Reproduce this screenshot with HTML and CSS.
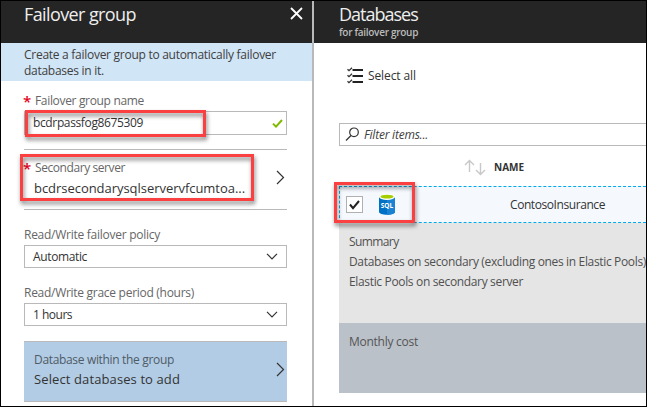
FILE: index.html
```html
<!DOCTYPE html>
<html lang="en">
<head>
<meta charset="utf-8">
<title>Failover group</title>
<link rel="stylesheet" href="styles.css">
</head>
<body>
<div class="frame">
  <section class="blade blade-group">
    <header class="blade-head">
      <h1 class="title title-group">Failover group</h1>
      <svg class="close" width="13" height="13" viewBox="0 0 13 13"><path d="M1 1l11 11M12 1L1 12"/></svg>
    </header>
    <p class="info">Create a failover group to automatically failover<br>databases in it.</p>
    <div class="form">
      <label class="label required"><span class="star">*</span>Failover group name</label>
      <div class="field field-name">
        <span class="value value-name">bcdrpassfog8675309</span>
        <svg width="11" height="9" viewBox="0 0 11 9"><path class="valid" d="M1 4.6l3 3L10 1"/></svg>
        <i class="mark mark-name"></i>
      </div>
      <div class="picker picker-server">
        <div class="picker-text">
          <div class="label required server-label"><span class="star">*</span>Secondary server</div>
          <div class="picked picked-server">bcdrsecondarysqlservervfcumtoa...</div>
        </div>
        <svg class="chevron" width="9" height="15" viewBox="0 0 9 15"><path d="M1 1l6.5 6.5L1 14"/></svg>
        <i class="mark mark-server"></i>
      </div>
      <label class="label label-policy">Read/Write failover policy</label>
      <div class="field">
        <span class="value">Automatic</span>
        <svg width="12" height="7" viewBox="0 0 12 7"><path d="M1 .8l5 5 5-5"/></svg>
      </div>
      <label class="label label-grace">Read/Write grace period (hours)</label>
      <div class="field">
        <span class="value value-hours">1 hours</span>
        <svg width="12" height="7" viewBox="0 0 12 7"><path d="M1 .8l5 5 5-5"/></svg>
      </div>
      <div class="picker picker-db">
        <div class="picker-text">
          <div class="label">Database within the group</div>
          <div class="picked">Select databases to add</div>
        </div>
        <svg class="chevron" width="9" height="15" viewBox="0 0 9 15"><path d="M1 1l6.5 6.5L1 14"/></svg>
      </div>
    </div>
  </section>
  <section class="blade blade-databases">
    <header class="blade-head head-databases">
      <h1 class="title title-databases">Databases</h1>
      <div class="subtitle">for failover group</div>
    </header>
    <div class="toolbar">
      <svg width="16" height="17" viewBox="0 0 16 17"><path class="bars" d="M5.5 3H16M5.5 9H16M5.5 15H16"/><path class="ticks" d="M.5 2.2L2 3.7 5 .7M.5 8.2L2 9.7l3-3M.5 14.2L2 15.7l3-3"/></svg>
      <span>Select all</span>
    </div>
    <div class="filter">
      <svg width="15" height="15" viewBox="0 0 15 15"><circle cx="9" cy="5.3" r="4.3"/><path d="M6 8.5L1 13.5"/></svg>
      <span>Filter items...</span>
    </div>
    <div class="columns">
      <svg width="22" height="17" viewBox="0 0 22 17"><path d="M5.500 13V1.500M1 6l4.500-4.500L10 6M16.500 4v11.500M12 11l4.500 4.500L21 11"/></svg>
      <span>NAME</span>
    </div>
    <div class="row">
      <span class="check"><svg width="11" height="10" viewBox="0 0 11 10"><path d="M1 4.500l3 3.700L10 1"/></svg></span>
      <svg class="sql" width="16" height="21" viewBox="0 0 16 21">
        <path class="sql-body" d="M0 3v15c0 1.500 3.500 2.700 8 2.700s8-1.200 8-2.700V3z"/>
        <path class="sql-shade" d="M8 3h8v15c0 1.500-3.500 2.700-8 2.700z"/>
        <ellipse class="sql-rim" cx="8" cy="3" rx="8" ry="2.900"/>
        <ellipse class="sql-top" cx="8" cy="2.700" rx="6.500" ry="1.900"/>
        <text x="8" y="14.300">SQL</text>
      </svg>
      <span class="row-name">ContosoInsurance</span>
      <i class="mark mark-row"></i>
    </div>
    <div class="summary">
      <div class="sum-title">Summary</div>
      <div>Databases on secondary (excluding ones in Elastic Pools)</div>
      <div>Elastic Pools on secondary server</div>
    </div>
    <div class="cost">Monthly cost</div>
  </section>
</div>
</body>
</html>
```
FILE: styles.css
```css
* { box-sizing: border-box; }
body { margin: 0; font: 12px/20px "Open Sans", "Noto Sans", sans-serif; letter-spacing: -.34px; color: #404040; }
svg { display: block; flex: none; fill: none; stroke: #333; stroke-width: 1.2; }
.frame { display: flex; width: 647px; height: 407px; border: 1px solid #000; background: #fff; overflow: hidden; }
.blade { overflow: hidden; height: 405px; }
.blade-group { width: 313px; border-right: 2px solid #b9b9b9; flex: none; }
.blade-databases { flex: 1; min-width: 0; }
.blade-head { height: 42px; background: #252525; color: #fff; display: flex; justify-content: space-between; padding: 0 9px 0 23px; }
.blade-group .blade-head { width: 313px; border-right: 2px solid #444; }
.blade-group .close { margin-top: 6px; stroke: #fff; stroke-width: 1.8; }
.title { margin: 0; font-size: 18px; line-height: 26px; font-weight: 400; color: #eee; white-space: nowrap; }
.title-group { letter-spacing: -.6px; }
.head-databases { display: block; padding-left: 25px; }
.title-databases { letter-spacing: -1px; }
.subtitle { font-size: 10px; line-height: 12px; font-weight: 600; letter-spacing: -.29px; color: #bbb; margin-top: -1px; }
.info { margin: 0; height: 38px; padding: 4px 0 0 23px; background: #d0e5f6; line-height: 16px; letter-spacing: -.275px; white-space: nowrap; }
.form { width: 263px; margin-left: 23px; padding-top: 10px; }
.label { display: block; color: #666; letter-spacing: -.33px; }
.required { display: flex; }
.star { width: 11px; color: #e3001b; font-size: 15px; font-weight: 600; letter-spacing: 0; margin-left: -1px; margin-right: 1px; }
.field { position: relative; height: 23px; border: 1px solid #b9b9b9; padding: 0 8px; display: flex; align-items: center; justify-content: space-between; }
.field-name { height: 24px; padding: 0 3px 0 8px; }
.value { letter-spacing: -.365px; color: #333; }
.value-hours { letter-spacing: -.5px; }
.field .valid { stroke: #7fba00; stroke-width: 2; }
.picker { position: relative; height: 61px; border: solid #b9b9b9; border-width: 1px 0; display: flex; justify-content: space-between; padding-right: 2px; }
.picker-server { margin-top: 14px; }
.server-label { letter-spacing: -.42px; padding-top: 8px; }
.picked { font-size: 13px; letter-spacing: .109px; color: #333; }
.picked-server { padding-left: 10px; letter-spacing: -.04px; }
.chevron { margin-top: 20px; }
.label-policy { margin-top: 15px; letter-spacing: -.262px; }
.label-grace { margin-top: 15px; letter-spacing: -.281px; }
.picker-db { margin-top: 15px; background: #b2cce5; padding-left: 10px; padding-top: 8px; }
.picker-db .label { color: #4f5b66; }
.picker-db .picked { margin-top: -1px; }
.picker-db .chevron { margin-top: 12px; }
.mark { position: absolute; border: 3px solid #fb4042; filter: drop-shadow(1px 3px 2px rgba(0, 0, 0, .5)); }
.mark-name { left: 0; top: -2px; width: 181px; height: 27px; }
.mark-server { left: -4px; top: 4px; width: 234px; height: 47px; }
.mark-row { left: -6px; top: -5px; width: 81px; height: 41px; }
.toolbar { height: 80px; padding: 0 0 15px 33px; display: flex; align-items: center; gap: 5px; letter-spacing: -.1px; color: #333; }
.toolbar .bars { stroke: #222; stroke-width: 2; }
.toolbar .ticks { stroke-width: 1.3; }
.filter { height: 23px; margin-left: 25px; border: solid #b9b9b9; border-width: 1px 0 1px 1px; display: flex; align-items: center; gap: 4px; padding-left: 5px; font-style: italic; letter-spacing: -.214px; }
.columns { height: 40px; padding: 2px 0 0 150px; display: flex; align-items: center; gap: 8px; font-size: 10px; font-weight: 700; letter-spacing: 0; color: #333; }
.columns svg { stroke: #c8c8c8; stroke-width: 1.4; }
.row { position: relative; height: 37px; margin-left: 25px; border: 1px dashed #00abec; border-right: 0; background: #f5f9fe; display: flex; align-items: center; }
.check { width: 17px; height: 17px; margin-left: 6px; border: 1px solid #b0b0b0; background: #fff; display: flex; align-items: center; justify-content: center; }
.check path { stroke: #222; stroke-width: 2; }
.sql { margin-left: 16px; stroke: none; }
.sql-body { fill: #0072c6; }
.sql-shade { fill: #1a82d2; }
.sql-rim { fill: #fff; }
.sql-top { fill: #a5ce00; }
.sql text { fill: #fff; font-size: 6.500px; font-weight: 700; text-anchor: middle; letter-spacing: 0; }
.row-name { margin-left: 115px; letter-spacing: -.424px; color: #333; }
.summary { height: 100px; margin-left: 25px; padding: 9px 0 0 10px; background: #e5e5e5; white-space: nowrap; overflow: hidden; color: #505050; }
.sum-title { letter-spacing: -.6px; }
.cost { height: 70px; margin-left: 25px; padding: 9px 0 0 10px; background: #bac1c9; color: #555; letter-spacing: -.26px; }
```
